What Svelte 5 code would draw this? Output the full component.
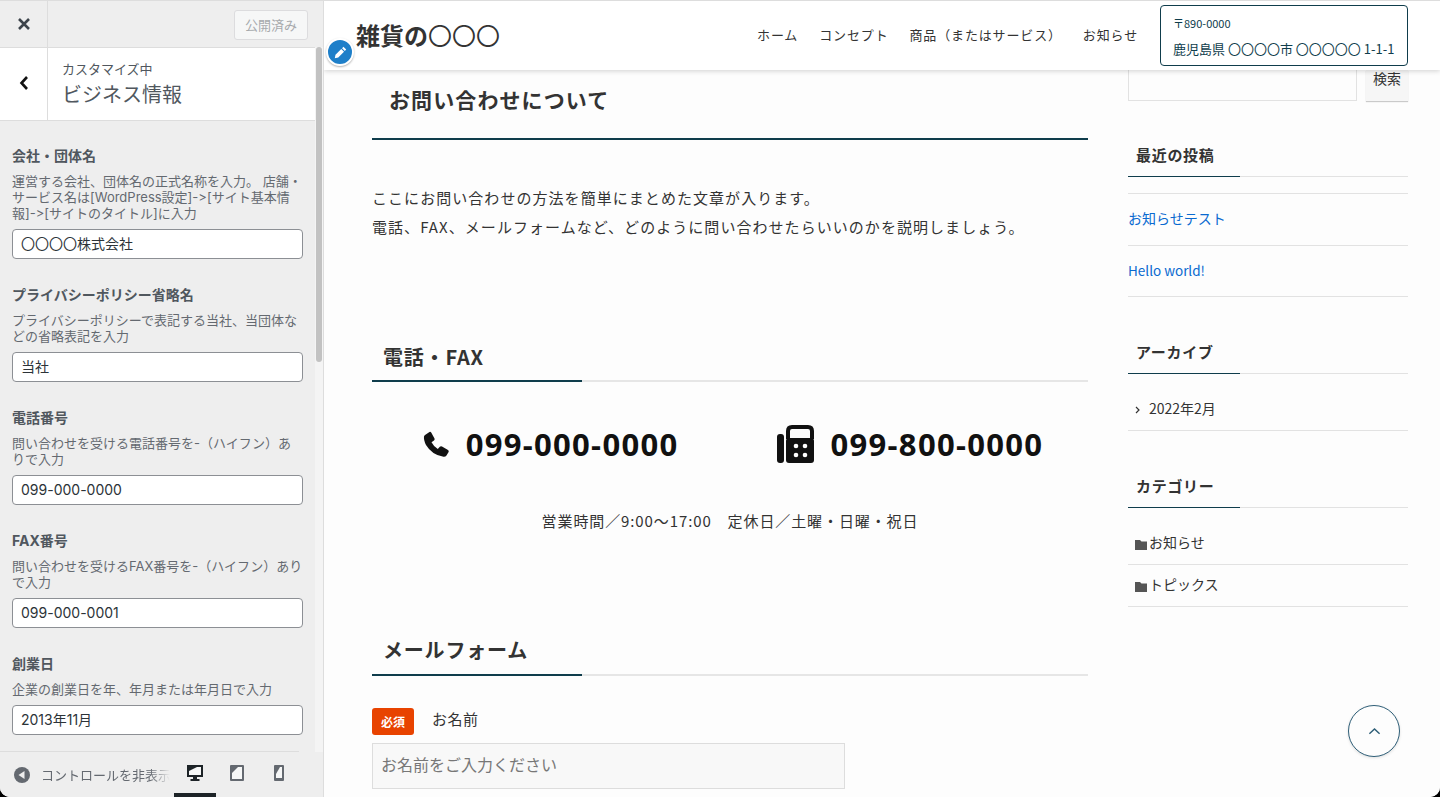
<script>
  const fields = [
    { label: '会社・団体名', desc: '運営する会社、団体名の正式名称を入力。 店舗・サービス名は[WordPress設定]->[サイト基本情報]->[サイトのタイトル]に入力', value: '〇〇〇〇株式会社' },
    { label: 'プライバシーポリシー省略名', desc: 'プライバシーポリシーで表記する当社、当団体などの省略表記を入力', value: '当社' },
    { label: '電話番号', desc: '問い合わせを受ける電話番号を-（ハイフン）ありで入力', value: '099-000-0000' },
    { label: 'FAX番号', desc: '問い合わせを受けるFAX番号を-（ハイフン）ありで入力', value: '099-000-0001' },
    { label: '創業日', desc: '企業の創業日を年、年月または年月日で入力', value: '2013年11月' }
  ];
  const nav = ['ホーム', 'コンセプト', '商品（またはサービス）', 'お知らせ'];
</script>

<div class="window">
  <aside class="panel">
    <div class="topbar">
      <div class="close">
        <svg viewBox="0 0 14 14" width="14" height="14"><path d="M2 2l10 10M12 2L2 12" stroke="#3c434a" stroke-width="2.6" fill="none" /></svg>
      </div>
      <div class="publish">公開済み</div>
    </div>
    <div class="scroller">
      <div class="controls">
        <div class="section">
          <div class="back">
            <svg viewBox="0 0 10 16" width="10" height="16"><path d="M8 2L2.5 8L8 14" stroke="#111" stroke-width="2.6" fill="none" /></svg>
          </div>
          <div class="section-text">
            <div class="crumb">カスタマイズ中</div>
            <div class="section-title">ビジネス情報</div>
          </div>
        </div>
        <div class="fields">
          {#each fields as f}
            <div class="field">
              <div class="field-label">{f.label}</div>
              <div class="field-desc">{f.desc}</div>
              <div class="field-input">{f.value}</div>
            </div>
          {/each}
        </div>
      </div>
      <div class="track"><div class="thumb"></div></div>
    </div>
    <div class="footer">
      <div class="collapse">
        <svg viewBox="0 0 16 16" width="16" height="16"><circle cx="8" cy="8" r="8" fill="#646970" /><path d="M10.5 4v8L4.5 8z" fill="#eee" /></svg>
        <span>コントロールを非表示</span>
      </div>
      <div class="devices">
        <div class="device active">
          <svg viewBox="0 0 16 16" width="16" height="16">
            <path d="M0 0h16v12H10v2h2.500v2h-9v-2H6v-2H0z" fill="#1d2327" />
            <path d="M2 2h12v8H2z" fill="#f6f7f7" />
            <path d="M2 2h8L2 6z" fill="#1d2327" />
          </svg>
        </div>
        <div class="device">
          <svg viewBox="0 0 16 16" width="16" height="16">
            <rect x="1" y="0" width="14" height="16" rx="1" fill="#646970" />
            <path d="M3 2h10v12H3z" fill="#f6f7f7" />
            <path d="M3 2h6L3 8z" fill="#646970" />
          </svg>
        </div>
        <div class="device">
          <svg viewBox="0 0 16 16" width="16" height="16">
            <rect x="3" y="0" width="10" height="16" rx="1" fill="#646970" />
            <path d="M5 2h6v11H5z" fill="#f6f7f7" />
            <path d="M5 2h4L5 9z" fill="#646970" />
          </svg>
        </div>
      </div>
    </div>
  </aside>

  <section class="preview">
    <header class="site-header">
      <div class="logo">雑貨の<span class="thin">〇〇〇</span></div>
      <nav class="nav">
        {#each nav as n}
          <span>{n}</span>
        {/each}
      </nav>
      <div class="address">
        <div class="zip">〒890-0000</div>
        <div>鹿児島県 〇〇〇〇市 〇〇〇〇〇 1-1-1</div>
      </div>
    </header>
    <div class="edit-pen">
      <svg viewBox="0 0 20 20" width="15" height="15"><path d="M13.900 2.400l3.700 3.700-1.800 1.800-3.700-3.700zM11 5.300l3.700 3.700-7.700 7.700-4.600 1 .9-4.700z" fill="#fff" /></svg>
    </div>

    <div class="page">
      <main class="main">
        <h1 class="page-title">お問い合わせについて</h1>
        <p class="lead">ここにお問い合わせの方法を簡単にまとめた文章が入ります。<br />電話、FAX、メールフォームなど、どのように問い合わせたらいいのかを説明しましょう。</p>

        <h2 class="heading tel-heading">電話・FAX</h2>
        <div class="numbers">
          <div class="number">
            <svg class="phone" viewBox="0 0 27 26" width="27" height="26"><path d="M2 4L6.500 1Q7.500 .5 8.200 1.600L11.500 7.500Q12 8.700 11 9.500L8.500 11.300Q11 16 14.800 18L16.800 15.800Q17.800 15 19 15.600L25 19Q26.200 19.800 25.600 21L23.500 24.500Q22.500 26 20.500 25.800Q9 24 3 14Q.5 9 1 5.500Q1.200 4.500 2 4z" fill="#111" /></svg>
            <span>099-000-0000</span>
          </div>
          <div class="number">
            <svg class="fax" viewBox="0 0 38 38" width="38" height="38">
              <rect x="0" y="9" width="7" height="29" rx="3" fill="#111" />
              <path d="M11 14V6Q11 2 15 2H31Q35 2 35 6V14" stroke="#111" stroke-width="4" fill="none" />
              <rect x="9" y="13" width="28" height="25" rx="3" fill="#111" />
              <circle cx="19" cy="21" r="2.300" fill="#fff" />
              <circle cx="28" cy="21" r="2.300" fill="#fff" />
              <circle cx="19" cy="30" r="2.300" fill="#fff" />
              <circle cx="28" cy="30" r="2.300" fill="#fff" />
            </svg>
            <span>099-800-0000</span>
          </div>
        </div>
        <p class="hours">営業時間／9:00～17:00　定休日／土曜・日曜・祝日</p>

        <h2 class="heading mail-heading">メールフォーム</h2>
        <div class="form-label"><span class="required">必須</span><span class="form-name">お名前</span></div>
        <div class="form-input">お名前をご入力ください</div>
      </main>

      <div class="side">
        <div class="search">
          <div class="search-input"></div>
          <div class="search-button">検索</div>
        </div>

        <h3 class="side-title first">最近の投稿</h3>
        <ul class="posts">
          <li>お知らせテスト</li>
          <li class="latin">Hello world!</li>
        </ul>

        <h3 class="side-title">アーカイブ</h3>
        <ul class="side-list">
          <li>
            <svg class="chev" viewBox="0 0 5 8" width="5" height="8"><path d="M1 1l3 3-3 3" stroke="#333" stroke-width="1.200" fill="none" /></svg>2022年2月
          </li>
        </ul>

        <h3 class="side-title">カテゴリー</h3>
        <ul class="side-list">
          <li>
            <svg class="folder" viewBox="0 0 12 10" width="12" height="10"><path d="M0 0h5l1.500 1.500H12V10H0z" fill="#555" /></svg>お知らせ
          </li>
          <li>
            <svg class="folder" viewBox="0 0 12 10" width="12" height="10"><path d="M0 0h5l1.500 1.500H12V10H0z" fill="#555" /></svg>トピックス
          </li>
        </ul>
      </div>
    </div>

    <div class="to-top">
      <svg viewBox="0 0 14 8" width="13" height="8"><path d="M1.500 7L7 1.800L12.500 7" stroke="#2f5f78" stroke-width="1.600" fill="none" /></svg>
    </div>
  </section>
</div>

<style>
  :global(body) {
    margin: 0;
    background: #000;
  }

  .window {
    display: flex;
    width: 1440px;
    height: 797px;
    overflow: hidden;
    border-radius: 0 0 10px 10px;
    font-family: "Noto Sans CJK JP", "Noto Sans", sans-serif;
    color: #333;
    background: #fdfdfd;
  }

  /* customizer */
  .panel {
    display: flex;
    flex-direction: column;
    flex: none;
    width: 323px;
    height: 797px;
    border-right: 1px solid #ddd;
    background: #eee;
    font-family: Inter, "Noto Sans CJK JP", sans-serif;
    font-variant-ligatures: none;
    font-feature-settings: "calt" 0;
  }

  .topbar {
    display: flex;
    flex: none;
    justify-content: space-between;
    align-items: center;
    height: 46px;
    border-top: 1px solid #ddd;
    padding-right: 15px;
    background: #eee;
  }

  .close {
    display: flex;
    justify-content: center;
    align-items: center;
    width: 48px;
    height: 46px;
    border-right: 1px solid #ddd;
    box-sizing: border-box;
  }

  .publish {
    box-sizing: border-box;
    width: 74px;
    height: 30px;
    margin-top: 1px;
    border: 1px solid #dcdcde;
    border-radius: 3px;
    background: #f6f7f7;
    color: #a7aaad;
    font-size: 13px;
    line-height: 28px;
    text-align: center;
  }

  .scroller {
    display: flex;
    flex: 1;
    min-height: 0;
  }

  .controls {
    flex: none;
    width: 315px;
    overflow: hidden;
  }

  .track {
    flex: 1;
    background: #f4f4f4;
    padding: 0 1px;
  }

  .thumb {
    height: 315px;
    border-radius: 3px;
    background: #c2c2c2;
  }

  .section {
    display: flex;
    box-sizing: border-box;
    height: 74px;
    border-top: 1px solid #ddd;
    border-bottom: 1px solid #ddd;
    background: #fff;
  }

  .back {
    display: flex;
    flex: none;
    justify-content: center;
    align-items: center;
    box-sizing: border-box;
    width: 48px;
    padding-bottom: 2px;
    border-right: 1px solid #ddd;
  }

  .section-text {
    padding: 13px 0 0 14px;
  }

  .crumb {
    font-size: 13px;
    line-height: 16px;
    color: #50575e;
  }

  .section-title {
    margin-top: 4px;
    font-size: 20px;
    line-height: 28px;
    color: #50575e;
  }

  .fields {
    padding: 24px 12px 0;
  }

  .field {
    margin-bottom: 25px;
  }

  .field-label {
    font-size: 14px;
    font-weight: 700;
    line-height: 21px;
    color: #50575e;
  }

  .field-desc {
    margin: 7px 0 8px;
    font-size: 13px;
    line-height: 16px;
    color: #646970;
  }

  .field-input {
    box-sizing: border-box;
    width: 291px;
    height: 30px;
    border: 1px solid #8c8f94;
    border-radius: 4px;
    padding: 0 8px;
    background: #fff;
    font-size: 14px;
    line-height: 28px;
    color: #2c3338;
  }

  .footer {
    display: flex;
    flex: none;
    align-items: stretch;
    height: 45px;
    background: #eee;
    position: relative;
  }

  .footer::before {
    content: "";
    position: absolute;
    left: 0;
    top: -1px;
    width: 299px;
    height: 1px;
    background: #ddd;
  }

  .collapse {
    display: flex;
    align-items: center;
    gap: 11px;
    box-sizing: border-box;
    width: 170px;
    padding-left: 14px;
    overflow: hidden;
    white-space: nowrap;
    font-size: 13px;
    color: #646970;
    -webkit-mask-image: linear-gradient(to right, #000 150px, transparent 170px);
    mask-image: linear-gradient(to right, #000 150px, transparent 170px);
  }

  .collapse svg {
    flex: none;
  }

  .devices {
    display: flex;
    margin-left: 4px;
  }

  .device {
    display: flex;
    justify-content: center;
    align-items: center;
    box-sizing: border-box;
    width: 42px;
    height: 45px;
    border-bottom: 4px solid transparent;
  }

  .device.active {
    border-bottom-color: #1d2327;
  }

  /* preview */
  .preview {
    position: relative;
    flex: 1;
    min-width: 0;
    height: 797px;
    overflow: hidden;
    background: #fdfdfd;
  }

  .site-header {
    position: absolute;
    top: 0;
    left: 0;
    right: 0;
    z-index: 2;
    display: flex;
    align-items: center;
    box-sizing: border-box;
    height: 70px;
    border-top: 1px solid #ddd;
    padding: 0 32px;
    background: #fff;
    box-shadow: 0 1px 5px rgba(0, 0, 0, 0.18);
  }

  .logo {
    font-size: 24px;
    font-weight: 700;
    line-height: 34px;
    margin-top: -1px;
  }

  .thin {
    font-weight: 400;
  }

  .nav {
    display: flex;
    gap: 21px;
    margin-left: auto;
    margin-top: -2px;
    font-size: 13px;
    letter-spacing: 0.85px;
  }

  .address {
    box-sizing: border-box;
    width: 248px;
    height: 61px;
    margin-left: 22px;
    border: 1px solid #0f3d4c;
    border-radius: 4px;
    padding: 4px 12px;
    font-size: 13px;
    line-height: 26px;
    color: #0f3d4c;
    white-space: nowrap;
  }

  .zip {
    font-size: 11px;
  }

  .edit-pen {
    position: absolute;
    top: 38px;
    left: 2px;
    z-index: 3;
    display: flex;
    justify-content: center;
    align-items: center;
    box-sizing: border-box;
    width: 28px;
    height: 28px;
    border: 2px solid #fff;
    border-radius: 50%;
    background: #1e7fc9;
    box-shadow: 0 1px 2px rgba(0, 0, 0, 0.3);
  }

  .page {
    display: flex;
    gap: 40px;
    padding: 70px 32px 0 48px;
  }

  .main {
    flex: none;
    width: 716px;
  }

  .page-title {
    box-sizing: border-box;
    height: 70px;
    margin: 0;
    border-bottom: 2px solid #0f3d4c;
    padding: 13px 0 0 17px;
    font-size: 21px;
    font-weight: 700;
    line-height: 32px;
    letter-spacing: 1.1px;
  }

  .lead {
    margin: 43px 0 0;
    font-size: 15px;
    line-height: 29px;
    letter-spacing: 1.05px;
  }

  .heading {
    position: relative;
    box-sizing: border-box;
    height: 40px;
    margin: 0;
    border-bottom: 2px solid #e6e6e6;
    padding-left: 11px;
    font-size: 20px;
    font-weight: 700;
    line-height: 30px;
    letter-spacing: 0.8px;
  }

  .heading::after {
    content: "";
    position: absolute;
    left: 0;
    bottom: -2px;
    width: 210px;
    height: 2px;
    background: #0f3d4c;
  }

  .tel-heading {
    margin-top: 101px;
  }

  .mail-heading {
    margin-top: 103px;
    line-height: 28px;
  }

  .numbers {
    display: flex;
    justify-content: center;
    gap: 98px;
    margin: 40px 0 0 6px;
  }

  .number {
    display: flex;
    align-items: center;
    gap: 16px;
    font-size: 31px;
    font-weight: 700;
    line-height: 44px;
    letter-spacing: 1.3px;
    color: #111;
    font-family: "Open Sans", sans-serif;
  }

  .phone,
  .fax {
    flex: none;
  }

  .hours {
    margin: 43px 0 0;
    text-align: center;
    font-size: 15px;
    line-height: 24px;
    letter-spacing: 0.9px;
  }

  .form-label {
    display: flex;
    align-items: center;
    gap: 18px;
    margin-top: 32px;
    font-size: 15px;
    letter-spacing: 0.5px;
  }

  .form-name {
    margin-top: -7px;
  }

  .required {
    box-sizing: border-box;
    width: 42px;
    height: 27px;
    border-radius: 3px;
    background: #e84300;
    color: #fff;
    font-size: 12px;
    font-weight: 700;
    line-height: 27px;
    letter-spacing: 0;
    text-align: center;
  }

  .form-input {
    box-sizing: border-box;
    width: 473px;
    height: 46px;
    margin-top: 8px;
    border: 1px solid #ddd;
    padding-left: 8px;
    background: #f8f8f8;
    color: #777;
    font-size: 16px;
    line-height: 41px;
  }

  .side {
    flex: none;
    width: 280px;
    font-size: 14px;
  }

  .search {
    display: flex;
    justify-content: space-between;
  }

  .search-input {
    box-sizing: border-box;
    width: 229px;
    height: 31px;
    border: 1px solid #e2e2e2;
    border-top: none;
  }

  .search-button {
    box-sizing: border-box;
    width: 42px;
    height: 31px;
    background: #f6f6f6;
    box-shadow: 0 1px 1px rgba(0, 0, 0, 0.2);
    text-align: center;
    line-height: 16px;
  }

  .side-title {
    position: relative;
    box-sizing: border-box;
    height: 42px;
    margin: 0;
    border-bottom: 1px solid #e2e2e2;
    padding: 8px 0 0 8px;
    font-size: 15px;
    font-weight: 700;
    line-height: 24px;
    letter-spacing: 0.7px;
  }

  .side-title::after {
    content: "";
    position: absolute;
    left: 0;
    bottom: -1px;
    width: 112px;
    height: 1px;
    background: #0f3d4c;
  }

  .side-title.first {
    margin-top: 34px;
  }

  .posts,
  .side-list {
    margin: 0;
    padding: 0;
    list-style: none;
  }

  .posts {
    margin: 16px 0 35px;
    border-top: 1px solid #e2e2e2;
  }

  .posts li {
    box-sizing: border-box;
    height: 51.5px;
    border-bottom: 1px solid #e2e2e2;
    color: #0a6ad0;
    line-height: 49px;
  }

  .posts .latin {
    font-size: 13.5px;
  }

  .side-list {
    margin-bottom: 35px;
    padding-top: 15px;
  }

  .side-list li {
    box-sizing: border-box;
    height: 42px;
    border-bottom: 1px solid #e2e2e2;
    line-height: 38px;
    padding-left: 7px;
  }

  .chev {
    margin-right: 9px;
    vertical-align: 0;
  }

  .folder {
    margin-right: 2px;
    vertical-align: -2px;
  }

  .to-top {
    position: absolute;
    left: 1024px;
    top: 705px;
    display: flex;
    justify-content: center;
    align-items: center;
    box-sizing: border-box;
    width: 52px;
    height: 52px;
    border: 1px solid #2f5f78;
    border-radius: 50%;
    background: #fdfdfd;
    box-shadow: 0 1px 3px rgba(0, 0, 0, 0.12);
  }
</style>
